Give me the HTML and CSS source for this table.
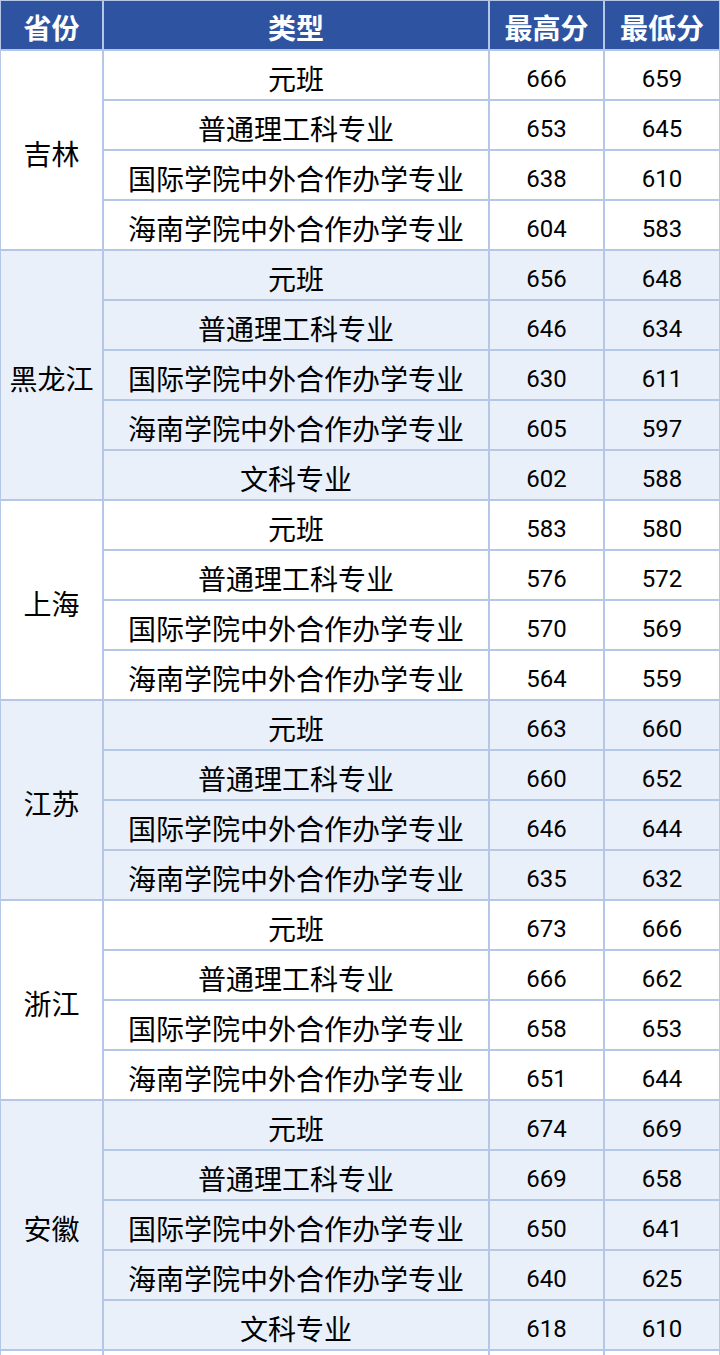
FILE: index.html
```html
<!DOCTYPE html>
<html lang="zh-CN">
<head>
<meta charset="utf-8">
<title>分数线</title>
<link rel="stylesheet" href="styles.css">
</head>
<body>
<div class="table">
  <div class="cell head">省份</div>
  <div class="cell head">类型</div>
  <div class="cell head">最高分</div>
  <div class="cell head">最低分</div>

  <div class="cell prov span4">吉林</div>
  <div class="cell">元班</div><div class="cell num">666</div><div class="cell num">659</div>
  <div class="cell">普通理工科专业</div><div class="cell num">653</div><div class="cell num">645</div>
  <div class="cell">国际学院中外合作办学专业</div><div class="cell num">638</div><div class="cell num">610</div>
  <div class="cell">海南学院中外合作办学专业</div><div class="cell num">604</div><div class="cell num">583</div>

  <div class="cell prov span5 alt">黑龙江</div>
  <div class="cell alt">元班</div><div class="cell num alt">656</div><div class="cell num alt">648</div>
  <div class="cell alt">普通理工科专业</div><div class="cell num alt">646</div><div class="cell num alt">634</div>
  <div class="cell alt">国际学院中外合作办学专业</div><div class="cell num alt">630</div><div class="cell num alt">611</div>
  <div class="cell alt">海南学院中外合作办学专业</div><div class="cell num alt">605</div><div class="cell num alt">597</div>
  <div class="cell alt">文科专业</div><div class="cell num alt">602</div><div class="cell num alt">588</div>

  <div class="cell prov span4">上海</div>
  <div class="cell">元班</div><div class="cell num">583</div><div class="cell num">580</div>
  <div class="cell">普通理工科专业</div><div class="cell num">576</div><div class="cell num">572</div>
  <div class="cell">国际学院中外合作办学专业</div><div class="cell num">570</div><div class="cell num">569</div>
  <div class="cell">海南学院中外合作办学专业</div><div class="cell num">564</div><div class="cell num">559</div>

  <div class="cell prov span4 alt">江苏</div>
  <div class="cell alt">元班</div><div class="cell num alt">663</div><div class="cell num alt">660</div>
  <div class="cell alt">普通理工科专业</div><div class="cell num alt">660</div><div class="cell num alt">652</div>
  <div class="cell alt">国际学院中外合作办学专业</div><div class="cell num alt">646</div><div class="cell num alt">644</div>
  <div class="cell alt">海南学院中外合作办学专业</div><div class="cell num alt">635</div><div class="cell num alt">632</div>

  <div class="cell prov span4">浙江</div>
  <div class="cell">元班</div><div class="cell num">673</div><div class="cell num">666</div>
  <div class="cell">普通理工科专业</div><div class="cell num">666</div><div class="cell num">662</div>
  <div class="cell">国际学院中外合作办学专业</div><div class="cell num">658</div><div class="cell num">653</div>
  <div class="cell">海南学院中外合作办学专业</div><div class="cell num">651</div><div class="cell num">644</div>

  <div class="cell prov span5 alt">安徽</div>
  <div class="cell alt">元班</div><div class="cell num alt">674</div><div class="cell num alt">669</div>
  <div class="cell alt">普通理工科专业</div><div class="cell num alt">669</div><div class="cell num alt">658</div>
  <div class="cell alt">国际学院中外合作办学专业</div><div class="cell num alt">650</div><div class="cell num alt">641</div>
  <div class="cell alt">海南学院中外合作办学专业</div><div class="cell num alt">640</div><div class="cell num alt">625</div>
  <div class="cell alt">文科专业</div><div class="cell num alt">618</div><div class="cell num alt">610</div>

  <div class="cell prov"></div>
  <div class="cell"></div><div class="cell num"></div><div class="cell num"></div>
</div>
</body>
</html>
```
FILE: styles.css
```css
html, body {
  margin: 0;
  padding: 0;
  background: #ffffff;
}

.table {
  display: grid;
  grid-template-columns: 101px 384px 113px 114px;
  grid-auto-rows: 48px;
  gap: 2px;
  padding: 1px;
  width: 720px;
  box-sizing: border-box;
  background: #b4c7e7;
  font-family: "Noto Sans CJK SC", "Noto Sans", sans-serif;
  color: #000000;
}

.cell {
  background: #ffffff;
  display: flex;
  align-items: center;
  justify-content: center;
  box-sizing: border-box;
  padding-top: 6px;
  font-size: 28px;
  line-height: 1;
  white-space: nowrap;
}

.cell.alt {
  background: #e9f0fa;
}

.head {
  background: #2e53a0;
  color: #ffffff;
  font-weight: bold;
  padding-top: 3px;
}

.num {
  font-family: Roboto, "Liberation Sans", sans-serif;
  font-size: 24px;
  padding-top: 7px;
}

.span4 {
  grid-row: span 4;
}

.span5 {
  grid-row: span 5;
}
```
